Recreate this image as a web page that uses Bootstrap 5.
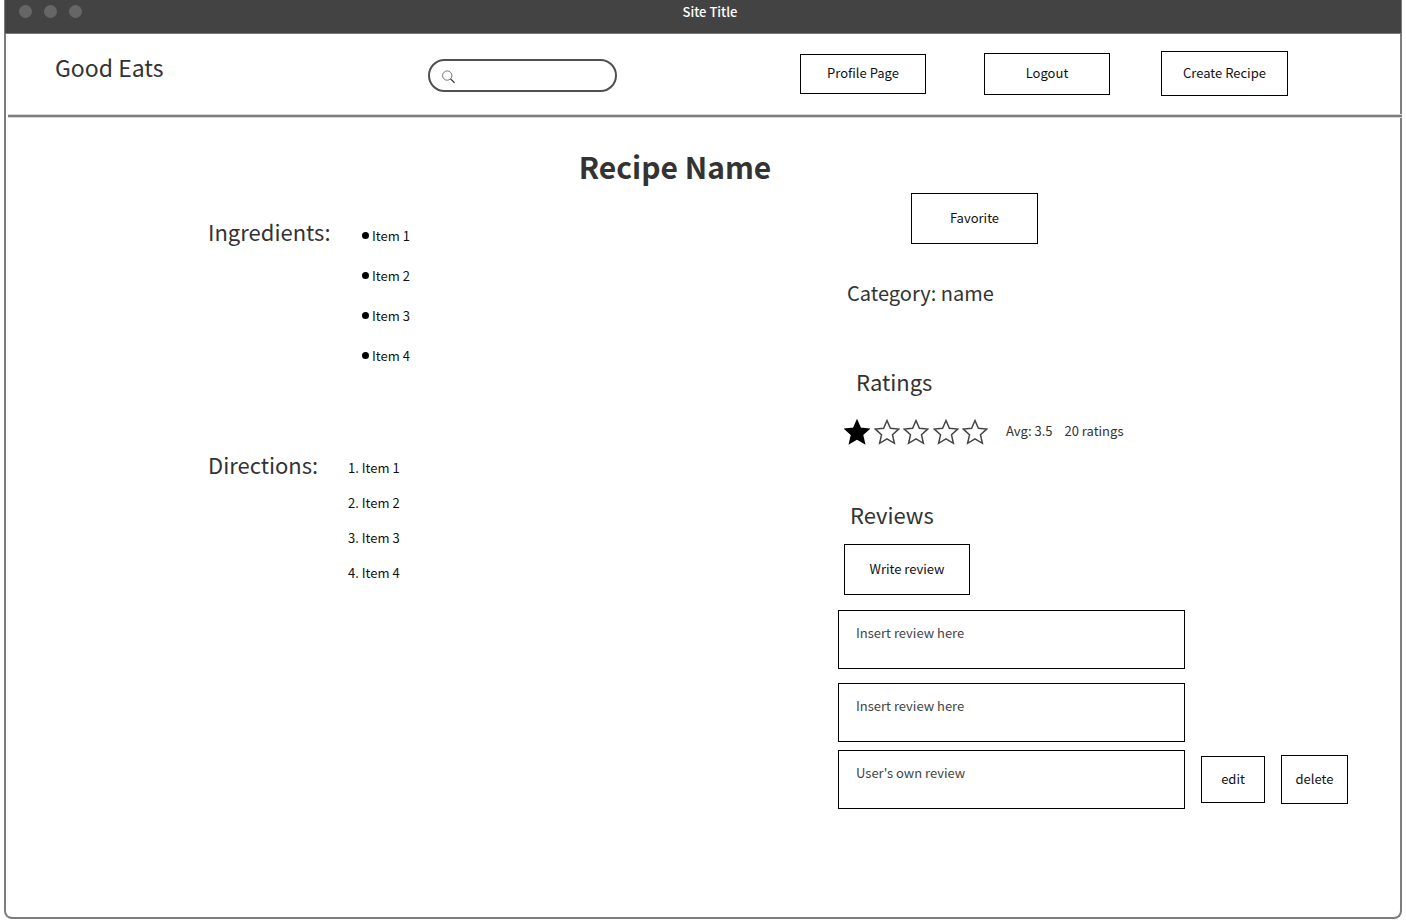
<!DOCTYPE html>
<html lang="en">
<head>
<meta charset="utf-8">
<meta name="viewport" content="width=device-width, initial-scale=1">
<title>Good Eats</title>
<link href="https://cdn.jsdelivr.net/npm/bootstrap@5.3.0/dist/css/bootstrap.min.css" rel="stylesheet">
<style>
  body { font-family: "Noto Sans CJK SC", "Noto Sans", sans-serif; font-size: 13px; line-height: 20px; color: #111; background: #fff; }
  .window { margin: 0 4px 2px; min-height: calc(100vh - 2px); border: 2px solid #7d7d7d; border-top: 0; border-radius: 0 0 8px 8px; }
  .titlebar { height: 34px; margin: 0 -1px; background: #434343; border-bottom: 1px solid #7a7878; color: #fff; display: grid; grid-template-columns: 1fr auto 1fr; }
  .dots { padding: 5px 0 0 14px; gap: 12px; }
  .dots span { width: 13px; height: 13px; border-radius: 50%; background: #666; }
  .site-title { font-weight: 500; padding: 2px 0 0 14px; }
  .topbar { display: grid; grid-template-columns: 422fr 372fr 600fr; height: 80px; }
  .brand { font-size: 23px; line-height: 32px; color: #333; padding: 17px 0 0 49px; text-decoration: none; }
  .search-form { padding-top: 3px; }
  .search { width: 189px; height: 33px; border: 2px solid #505050; border-radius: 17px; padding: 2px 12px 0; }
  .search input { border: 0; outline: 0; background: transparent; min-width: 0; margin-left: 6px; }
  .rule { height: 4px; margin: 0 -2px 0 2px; border: 1px solid #d8d8d8; border-width: 1px 0; background: #7d7d7d; opacity: 1; }
  .btn-line { --bs-btn-border-radius: 0; --bs-btn-border-color: #000; --bs-btn-color: #111; --bs-btn-bg: #fff; --bs-btn-font-size: 13px; --bs-btn-line-height: 20px; --bs-btn-padding-x: 0; --bs-btn-padding-y: 0; --bs-btn-hover-bg: #eee; --bs-btn-hover-border-color: #000; width: 126px; padding-bottom: 2px; }
  .site-nav { padding-bottom: 1px; }
  .nav-profile { height: 40px; margin-right: 58px; }
  .nav-logout { height: 42px; margin-right: 51px; }
  .nav-create { height: 45px; width: 127px; }
  .btn-tall { height: 51px; }
  .page-grid { display: grid; grid-template-columns: 832fr 562fr; }
  h1 { font-size: 30px; line-height: 40px; font-weight: 700; color: #333; margin: 28px 56px 0 0; text-align: center; }
  h2 { font-size: 22px; line-height: 32px; font-weight: 400; color: #333; margin: 0; }
  .recipe { padding-left: 202px; }
  .recipe h2 { width: 140px; }
  .ingredients { margin-top: 29px; }
  .ingredients ul { padding: 11px 0 0 14px; }
  .ingredients li { margin-bottom: 20px; display: flex; align-items: center; gap: 3px; }
  .ingredients li::before { content: ""; width: 7px; height: 7px; border-radius: 50%; background: #000; margin-bottom: 2px; }
  .directions { margin-top: 62px; }
  .directions ol { padding: 10px 0 0; list-style-position: inside; }
  .directions li { margin-bottom: 15px; }
  .favorite { width: 127px; margin: 7px 0 0 73px; }
  .category { font-size: 20px; margin: 33px 0 0 9px; }
  .ratings { margin: 56px 0 0 18px; }
  .stars { width: 144px; margin-left: 6px; }
  .stars svg { width: 26px; height: 28px; }
  .stars path { fill: none; stroke: #444; stroke-width: 1.5; }
  .stars .filled path { fill: #000; stroke: #000; }
  .rating-row { margin-top: 21px; }
  .score { color: #333; gap: 12px; margin-left: 18px; padding-bottom: 2px; }
  .reviews { margin: 52px 0 0 12px; }
  .write { margin: 14px 0 15px 6px; }
  .review { width: 347px; height: 59px; border: 1px solid #000; padding: 12px 17px; color: #444; }
  .next { margin-top: 14px; }
  .own { gap: 16px; margin-top: 8px; }
  .btn-edit { width: 64px; height: 47px; }
  .btn-delete { width: 67px; height: 49px; }
</style>
</head>
<body>
<div class="window">
  <div class="titlebar">
    <div class="dots d-flex"><span></span><span></span><span></span></div>
    <div class="site-title">Site Title</div>
  </div>
  <header class="topbar">
    <a class="brand" href="#">Good Eats</a>
    <form class="search-form d-flex align-items-center" role="search">
      <label class="search d-flex align-items-center">
        <svg width="14" height="14" viewBox="0 0 14 14" fill="none" stroke="#333" aria-hidden="true"><circle cx="5.5" cy="5.5" r="4.900" stroke-width=".7"/><path d="M9 9l4.200 4" stroke-width="1.300"/></svg>
        <input class="flex-grow-1" type="search" aria-label="Search recipes">
      </label>
    </form>
    <nav class="site-nav d-flex align-items-center">
      <button class="btn btn-line nav-profile" type="button">Profile Page</button>
      <button class="btn btn-line nav-logout" type="button">Logout</button>
      <button class="btn btn-line nav-create" type="button">Create Recipe</button>
    </nav>
  </header>
  <hr class="rule">
  <main>
    <h1>Recipe Name</h1>
    <div class="page-grid">
      <div class="recipe">
        <section class="ingredients d-flex">
          <h2>Ingredients:</h2>
          <ul class="list-unstyled mb-0"><li>Item 1</li><li>Item 2</li><li>Item 3</li><li>Item 4</li></ul>
        </section>
        <section class="directions d-flex">
          <h2>Directions:</h2>
          <ol class="mb-0"><li>Item 1</li><li>Item 2</li><li>Item 3</li><li>Item 4</li></ol>
        </section>
      </div>
      <div>
        <button class="favorite btn btn-line btn-tall" type="button">Favorite</button>
        <h2 class="category">Category: name</h2>
        <h2 class="ratings">Ratings</h2>
        <div class="rating-row d-flex align-items-center">
          <div class="stars d-flex justify-content-between" role="img" aria-label="1 of 5 stars">
            <svg class="filled" viewBox="0 0 26 28"><path d="M13 2.500l3.400 7.700 8.300.9-6.200 5.700 1.900 8.500-7.400-4.400-7.400 4.400 1.900-8.500-6.200-5.700 8.300-.9z"/></svg>
            <svg viewBox="0 0 26 28"><path d="M13 2.500l3.400 7.700 8.300.9-6.200 5.700 1.900 8.500-7.400-4.400-7.400 4.400 1.900-8.500-6.200-5.700 8.300-.9z"/></svg>
            <svg viewBox="0 0 26 28"><path d="M13 2.500l3.400 7.700 8.300.9-6.200 5.700 1.900 8.500-7.400-4.400-7.400 4.400 1.900-8.500-6.200-5.700 8.300-.9z"/></svg>
            <svg viewBox="0 0 26 28"><path d="M13 2.500l3.400 7.700 8.300.9-6.200 5.700 1.900 8.500-7.400-4.400-7.400 4.400 1.900-8.500-6.200-5.700 8.300-.9z"/></svg>
            <svg viewBox="0 0 26 28"><path d="M13 2.500l3.400 7.700 8.300.9-6.200 5.700 1.900 8.500-7.400-4.400-7.400 4.400 1.900-8.500-6.200-5.700 8.300-.9z"/></svg>
          </div>
          <div class="score d-flex"><span>Avg: 3.5</span><span>20 ratings</span></div>
        </div>
        <h2 class="reviews">Reviews</h2>
        <button class="write btn btn-line btn-tall" type="button">Write review</button>
        <div class="review">Insert review here</div>
        <div class="review next">Insert review here</div>
        <div class="own d-flex align-items-center">
          <div class="review">User's own review</div>
          <button class="btn btn-line btn-edit" type="button">edit</button>
          <button class="btn btn-line btn-delete" type="button">delete</button>
        </div>
      </div>
    </div>
  </main>
</div>
<script src="https://cdn.jsdelivr.net/npm/bootstrap@5.3.0/dist/js/bootstrap.bundle.min.js"></script>
</body>
</html>
